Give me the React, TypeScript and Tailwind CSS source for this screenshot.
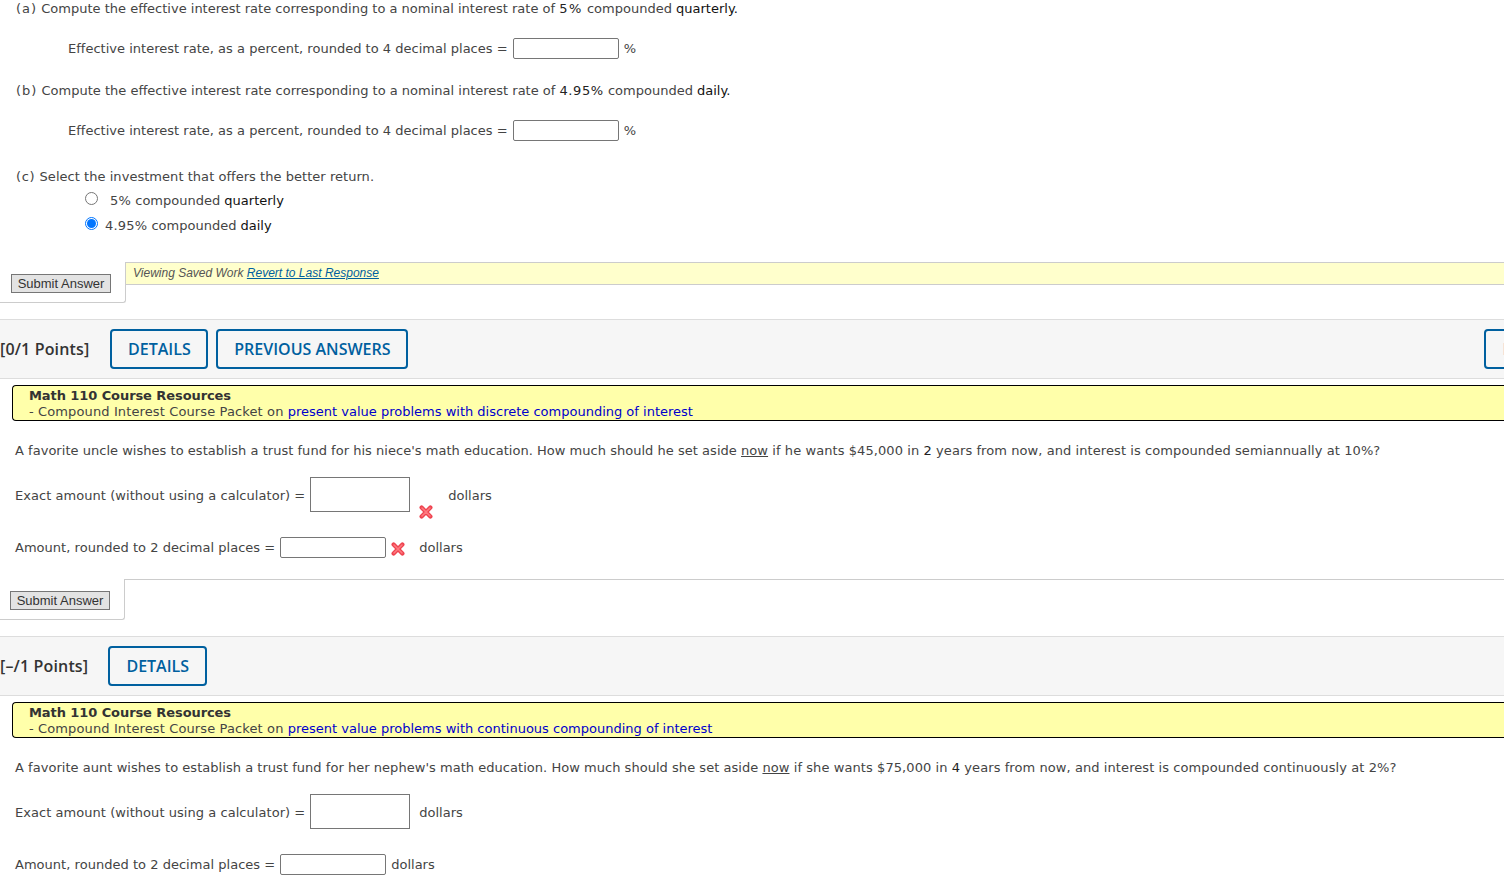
import React from "react";

const verdana = "font-['DejaVu_Sans',Verdana,sans-serif] text-[13px] leading-[16px] text-[#444444] whitespace-nowrap";

function Box({ tall, w = "w-[106px]" }: { tall?: boolean; w?: string }) {
  return (
    <span
      className={`inline-block border border-[#767676] bg-white ${w} ${tall ? "h-[35px] rounded-none" : "h-[21px] rounded-[2px]"}`}
    />
  );
}

function RedX() {
  return (
    <svg width="14" height="14" viewBox="0 0 14 14" className="block shrink-0">
      <path d="M2.6 2.6 L11.4 11.4 M11.4 2.6 L2.6 11.4" stroke="#ee4450" strokeWidth="4.2" strokeLinecap="round" />
      <path d="M3 3 L11 11 M11 3 L3 11" stroke="#ff7a80" strokeWidth="1.6" strokeLinecap="round" />
    </svg>
  );
}

function Submit() {
  return (
    <button className="block h-[19px] w-[100px] border border-[#767676] bg-[#e3e3e3] font-['Liberation_Sans',Arial,sans-serif] text-[13px] leading-[15px] text-[#333333] whitespace-nowrap">
      Submit Answer
    </button>
  );
}

function HeaderButton({ children, w }: { children: React.ReactNode; w: string }) {
  return (
    <span className={`flex h-[40px] ${w} shrink-0 items-center justify-center rounded-[4px] border-2 border-[#00609f] text-[16px] font-semibold text-[#00609f] whitespace-nowrap`}>
      {children}
    </span>
  );
}

function QuestionHeader({ label, gap, children }: { label: string; gap: string; children: React.ReactNode }) {
  return (
    <div className="flex h-[60px] items-center border-y border-[#dddddd] bg-[#f6f6f6] font-['Open_Sans',sans-serif]">
      <span className={`text-[16px] font-semibold tracking-[0.15px] text-[#333333] whitespace-nowrap ${gap}`}>{label}</span>
      {children}
    </div>
  );
}

function Resource({ topic }: { topic: string }) {
  return (
    <div className={`ml-[12px] mt-[6px] h-[36px] rounded-l-[4px] border border-r-0 border-black bg-[#ffffaa] pl-[16px] pt-[2px] ${verdana}`}>
      <div className="font-bold tracking-[-0.08px] text-[#333333]">Math 110 Course Resources</div>
      <div>
        <span className="tracking-[0.12px]">- Compound Interest Course Packet on </span>
        <span className="text-[#0000cc]">{topic}</span>
      </div>
    </div>
  );
}

function EffectiveRow({ mt }: { mt: string }) {
  return (
    <div className={`${mt} flex h-[21px] items-center pl-[68px] ${verdana}`}>
      <span className="tracking-[0.015px]">Effective interest rate, as a percent, rounded to 4 decimal places =</span>
      <span className="ml-[5px] flex"><Box /></span>
      <span className="ml-[5px]">%</span>
    </div>
  );
}

export default function App() {
  return (
    <div className="h-[886px] w-[1504px] overflow-hidden bg-white">
      {/* Part (a) */}
      <div className={`pl-[16px] pt-[1px] ${verdana}`}>
        <span className="tracking-[1px]">(a)</span> Compute the effective interest rate corresponding to a nominal interest rate of{" "}
        <span className="tracking-[1.5px] text-[#222222]">5%</span> compounded <span className="text-[#111111]">quarterly.</span>
      </div>
      <EffectiveRow mt="mt-[21px]" />

      {/* Part (b) */}
      <div className={`mt-[24px] h-[16px] pl-[16px] ${verdana}`}>
        <span className="tracking-[1px]">(b)</span> Compute the effective interest rate corresponding to a nominal interest rate of{" "}
        <span className="tracking-[0.6px] text-[#222222]">4.95%</span> compounded <span className="text-[#111111]">daily.</span>
      </div>
      <EffectiveRow mt="mt-[21px]" />

      {/* Part (c) */}
      <div className={`mt-[28px] h-[16px] pl-[16px] tracking-[0.04px] ${verdana}`}>
        <span className="tracking-[0.7px]">(c)</span> Select the investment that offers the better return.
      </div>
      <div className={`mt-[8px] flex h-[16px] items-center pl-[85px] ${verdana}`}>
        <span className="relative -top-[3px] block h-[13px] w-[13px] rounded-full border border-[#767676] bg-white" />
        <span className="ml-[12px]"><span className="tracking-[0.25px]">5%</span> compounded <span className="text-[#111111]">quarterly</span></span>
      </div>
      <div className={`mt-[9px] flex h-[16px] items-center pl-[85px] ${verdana}`}>
        <span className="relative -top-[3px] flex h-[13px] w-[13px] items-center justify-center rounded-full border border-[#0075ff] bg-white">
          <span className="h-[9px] w-[9px] rounded-full bg-[#0075ff]" />
        </span>
        <span className="ml-[7px]"><span className="tracking-[0.2px]">4.95%</span> compounded <span className="text-[#111111]">daily</span></span>
      </div>

      {/* Submit row 1 */}
      <div className="mt-[28px] flex h-[41px] items-stretch">
        <div className="h-[41px] w-[126px] shrink-0 rounded-br-[3px] border-r border-b border-[#cccccc] pl-[11px] pt-[12px]">
          <Submit />
        </div>
        <div className="h-[23px] flex-1 border-y border-[#cccccc] bg-[#ffffcc] pl-[7px] font-['Liberation_Sans',Arial,sans-serif] text-[12px] italic leading-[20px] text-[#555555] whitespace-nowrap">
          Viewing Saved Work <span className="text-[#00609f] underline">Revert to Last Response</span>
        </div>
      </div>

      {/* Question 2 */}
      <div className="mt-[16px]">
        <QuestionHeader label="[0/1 Points]" gap="mr-[21px]">
          <HeaderButton w="w-[98px]">DETAILS</HeaderButton>
          <span className="ml-[8px]"><HeaderButton w="w-[192px]">PREVIOUS ANSWERS</HeaderButton></span>
          <span className="ml-[1076px]"><HeaderButton w="w-[190px]">PRACTICE ANOTHER</HeaderButton></span>
        </QuestionHeader>
      </div>
      <Resource topic="present value problems with discrete compounding of interest" />
      <div className={`mt-[22px] h-[16px] pl-[15px] tracking-[0.026px] ${verdana}`}>
        A favorite uncle wishes to establish a trust fund for his niece's math education. How much should he set aside{" "}
        <span className="tracking-[0.078px]">
          <span className="underline">now</span> if he wants $45,000 in <span className="text-[#222222]">2</span> years from now, and interest is compounded semiannually at 10%?
        </span>
      </div>
      <div className={`mt-[18px] flex h-[35px] items-center pl-[15px] ${verdana}`}>
        <span className="pt-[2px] tracking-[0.05px]">Exact amount (without using a calculator) =</span>
        <span className="ml-[5px] flex"><Box tall w="w-[100px]" /></span>
        <span className="relative top-[17px] ml-[9px]"><RedX /></span>
        <span className="ml-[15px] pt-[2px]">dollars</span>
      </div>
      <div className={`mt-[25px] flex h-[21px] items-center pl-[15px] ${verdana}`}>
        <span className="tracking-[0.027px]">Amount, rounded to 2 decimal places =</span>
        <span className="ml-[5px] flex"><Box /></span>
        <span className="relative top-[1px] ml-[5px]"><RedX /></span>
        <span className="ml-[14px]">dollars</span>
      </div>

      {/* Submit row 2 */}
      <div className="mt-[21px] flex h-[41px]">
        <div className="h-[41px] w-[125px] shrink-0 rounded-br-[3px] border-r border-b border-[#cccccc] pl-[10px] pt-[12px]">
          <Submit />
        </div>
        <div className="h-0 flex-1 border-t border-[#cccccc]" />
      </div>

      {/* Question 3 */}
      <div className="mt-[16px]">
        <QuestionHeader label="[–/1 Points]" gap="mr-[20px]">
          <HeaderButton w="w-[99px]">DETAILS</HeaderButton>
        </QuestionHeader>
      </div>
      <Resource topic="present value problems with continuous compounding of interest" />
      <div className={`mt-[22px] h-[16px] pl-[15px] tracking-[0.035px] ${verdana}`}>
        A favorite aunt wishes to establish a trust fund for her nephew's math education. How much should she set aside{" "}
        <span className="tracking-[0.078px]">
          <span className="underline">now</span> if she wants $75,000 in <span className="text-[#222222]">4</span> years from now, and interest is compounded continuously at 2%?
        </span>
      </div>
      <div className={`mt-[18px] flex h-[35px] items-center pl-[15px] ${verdana}`}>
        <span className="pt-[2px] tracking-[0.05px]">Exact amount (without using a calculator) =</span>
        <span className="ml-[5px] flex"><Box tall w="w-[100px]" /></span>
        <span className="ml-[9px] pt-[2px]">dollars</span>
      </div>
      <div className={`mt-[25px] flex h-[21px] items-center pl-[15px] ${verdana}`}>
        <span className="tracking-[0.027px]">Amount, rounded to 2 decimal places =</span>
        <span className="ml-[5px] flex"><Box /></span>
        <span className="ml-[5px]">dollars</span>
      </div>
    </div>
  );
}
